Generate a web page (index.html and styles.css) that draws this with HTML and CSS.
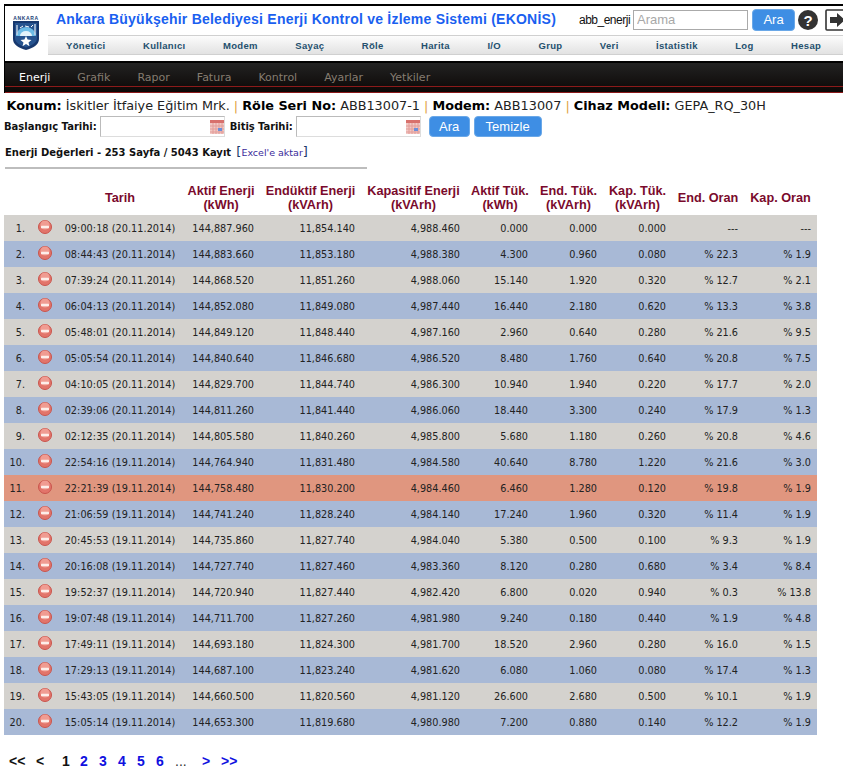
FILE: index.html
```html
<!DOCTYPE html>
<html lang="tr">
<head>
<meta charset="utf-8">
<title>EKONİS</title>
<link rel="stylesheet" href="styles.css">
</head>
<body>
<svg class="defs" width="0" height="0">
  <symbol id="minus" viewBox="0 0 14 14">
    <circle cx="7" cy="7" r="6.5" fill="#e2746a" stroke="#c9544c" stroke-width="1"/>
    <circle cx="7" cy="5" r="4.6" fill="#f09c92"/>
    <rect x="3" y="5.8" width="8" height="2.4" rx=".5" fill="#fdeeea"/>
  </symbol>
  <symbol id="cal" viewBox="0 0 14 14">
    <rect width="14" height="14" fill="#f2c8c4"/>
    <rect width="14" height="3" fill="#d8706c"/>
    <path d="M0 6h14M0 9h14M0 12h14M3 3v11M6 3v11M9 3v11M12 3v11" stroke="#e29c98" stroke-width="1"/>
    <rect x="8" y="8" width="4" height="3" fill="#6c8ed8"/>
  </symbol>
</svg>
<header class="frame">
  <div class="head">
    <svg class="logo" viewBox="0 0 30 36" width="30" height="36">
      <text x="15" y="4.5" text-anchor="middle" class="logo-text">ANKARA</text>
      <path d="M2 6h26v18c0 6-6 9-13 11C8 33 2 30 2 24z" fill="#17386e"/>
      <path d="M4 8h22v15c0 5-5 7-11 9.5-6-2.5-11-4.500-11-9.500z" fill="#26538f"/>
      <path d="M5 21a10 9 0 0 1 20 0z" fill="#6dbbe6"/>
      <path d="M9 21a6 5 0 0 1 12 0z" fill="#e4f2fa"/>
      <path d="M15 21l1.6 3.6 3.9.3-3 2.5 1 3.8-3.5-2.1-3.5 2.1 1-3.8-3-2.5 3.9-.3z" fill="#fff"/>
      <path d="M6 10v10M24 9v11" stroke="#c8d6e6" stroke-width="1.4"/>
      <path d="M9 13l3-2M14 11l4 1M20 12l2-2" stroke="#fff" stroke-width="1"/>
    </svg>
    <div class="head-main">
      <div class="head-top">
        <h1 class="title">Ankara Büyükşehir Belediyesi Enerji Kontrol ve İzleme Sistemi (EKONİS)</h1>
        <span class="user">abb_enerji</span>
        <input class="search" type="text" placeholder="Arama">
        <button class="btn btn-top" type="button">Ara</button>
        <svg class="help" viewBox="0 0 20 20" width="20" height="20">
          <circle cx="10" cy="10" r="10" fill="#333"/>
          <text x="10" y="15.5" text-anchor="middle" class="help-text">?</text>
        </svg>
        <svg class="exit" viewBox="0 0 20 22" width="20" height="22">
          <path d="M19 1H2a1 1 0 0 0-1 1v18a1 1 0 0 0 1 1h17" fill="none" stroke="#333" stroke-width="1.6"/>
          <path d="M5 8h7V4l8 7-8 7v-4H5z" fill="#333"/>
        </svg>
      </div>
      <nav class="menu">
        <a>Yönetici</a><a>Kullanıcı</a><a>Modem</a><a>Sayaç</a><a>Röle</a><a>Harita</a><a>I/O</a><a>Grup</a><a>Veri</a><a>İstatistik</a><a>Log</a><a>Hesap</a>
      </nav>
    </div>
  </div>
  <nav class="tabs">
    <a class="on">Enerji</a><a>Grafik</a><a>Rapor</a><a>Fatura</a><a>Kontrol</a><a>Ayarlar</a><a>Yetkiler</a>
  </nav>
</header>

<main class="main">
  <p class="info"><b>Konum:</b> İskitler İtfaiye Eğitim Mrk. <i>|</i> <b>Röle Seri No:</b> ABB13007-1 <i>|</i> <b>Modem:</b> ABB13007 <i>|</i> <b>Cihaz Modeli:</b> GEPA_RQ_30H</p>
  <form class="filter">
    <label class="lbl">Başlangıç Tarihi:</label>
    <span class="date"><svg class="cal"><use href="#cal"/></svg></span>
    <label class="lbl lbl-end">Bitiş Tarihi:</label>
    <span class="date"><svg class="cal"><use href="#cal"/></svg></span>
    <button class="btn btn-ara" type="button">Ara</button>
    <button class="btn btn-clear" type="button">Temizle</button>
  </form>
  <p class="count"><b>Enerji Değerleri - 253 Sayfa / 5043 Kayıt</b> <span class="br">[</span><a>Excel'e aktar</a><span class="br">]</span></p>
  <hr class="rule">
  <table class="grid">
    <colgroup>
      <col class="c-n"><col class="c-i"><col class="c-d"><col class="c-ae"><col class="c-ee"><col class="c-ke"><col class="c-at"><col class="c-et"><col class="c-kt"><col class="c-eo"><col class="c-ko">
    </colgroup>
    <thead>
      <tr><th></th><th></th><th>Tarih</th><th>Aktif Enerji<br>(kWh)</th><th>Endüktif Enerji<br>(kVArh)</th><th>Kapasitif Enerji<br>(kVArh)</th><th>Aktif Tük.<br>(kWh)</th><th>End. Tük.<br>(kVArh)</th><th>Kap. Tük.<br>(kVArh)</th><th>End. Oran</th><th>Kap. Oran</th></tr>
    </thead>
    <tbody>
      <tr><td>1.</td><td><svg class="del"><use href="#minus"/></svg></td><td>09:00:18 (20.11.2014)</td><td>144,887.960</td><td>11,854.140</td><td>4,988.460</td><td>0.000</td><td>0.000</td><td>0.000</td><td>---</td><td>---</td></tr>
      <tr><td>2.</td><td><svg class="del"><use href="#minus"/></svg></td><td>08:44:43 (20.11.2014)</td><td>144,883.660</td><td>11,853.180</td><td>4,988.380</td><td>4.300</td><td>0.960</td><td>0.080</td><td>% 22.3</td><td>% 1.9</td></tr>
      <tr><td>3.</td><td><svg class="del"><use href="#minus"/></svg></td><td>07:39:24 (20.11.2014)</td><td>144,868.520</td><td>11,851.260</td><td>4,988.060</td><td>15.140</td><td>1.920</td><td>0.320</td><td>% 12.7</td><td>% 2.1</td></tr>
      <tr><td>4.</td><td><svg class="del"><use href="#minus"/></svg></td><td>06:04:13 (20.11.2014)</td><td>144,852.080</td><td>11,849.080</td><td>4,987.440</td><td>16.440</td><td>2.180</td><td>0.620</td><td>% 13.3</td><td>% 3.8</td></tr>
      <tr><td>5.</td><td><svg class="del"><use href="#minus"/></svg></td><td>05:48:01 (20.11.2014)</td><td>144,849.120</td><td>11,848.440</td><td>4,987.160</td><td>2.960</td><td>0.640</td><td>0.280</td><td>% 21.6</td><td>% 9.5</td></tr>
      <tr><td>6.</td><td><svg class="del"><use href="#minus"/></svg></td><td>05:05:54 (20.11.2014)</td><td>144,840.640</td><td>11,846.680</td><td>4,986.520</td><td>8.480</td><td>1.760</td><td>0.640</td><td>% 20.8</td><td>% 7.5</td></tr>
      <tr><td>7.</td><td><svg class="del"><use href="#minus"/></svg></td><td>04:10:05 (20.11.2014)</td><td>144,829.700</td><td>11,844.740</td><td>4,986.300</td><td>10.940</td><td>1.940</td><td>0.220</td><td>% 17.7</td><td>% 2.0</td></tr>
      <tr><td>8.</td><td><svg class="del"><use href="#minus"/></svg></td><td>02:39:06 (20.11.2014)</td><td>144,811.260</td><td>11,841.440</td><td>4,986.060</td><td>18.440</td><td>3.300</td><td>0.240</td><td>% 17.9</td><td>% 1.3</td></tr>
      <tr><td>9.</td><td><svg class="del"><use href="#minus"/></svg></td><td>02:12:35 (20.11.2014)</td><td>144,805.580</td><td>11,840.260</td><td>4,985.800</td><td>5.680</td><td>1.180</td><td>0.260</td><td>% 20.8</td><td>% 4.6</td></tr>
      <tr><td>10.</td><td><svg class="del"><use href="#minus"/></svg></td><td>22:54:16 (19.11.2014)</td><td>144,764.940</td><td>11,831.480</td><td>4,984.580</td><td>40.640</td><td>8.780</td><td>1.220</td><td>% 21.6</td><td>% 3.0</td></tr>
      <tr class="alert"><td>11.</td><td><svg class="del"><use href="#minus"/></svg></td><td>22:21:39 (19.11.2014)</td><td>144,758.480</td><td>11,830.200</td><td>4,984.460</td><td>6.460</td><td>1.280</td><td>0.120</td><td>% 19.8</td><td>% 1.9</td></tr>
      <tr><td>12.</td><td><svg class="del"><use href="#minus"/></svg></td><td>21:06:59 (19.11.2014)</td><td>144,741.240</td><td>11,828.240</td><td>4,984.140</td><td>17.240</td><td>1.960</td><td>0.320</td><td>% 11.4</td><td>% 1.9</td></tr>
      <tr><td>13.</td><td><svg class="del"><use href="#minus"/></svg></td><td>20:45:53 (19.11.2014)</td><td>144,735.860</td><td>11,827.740</td><td>4,984.040</td><td>5.380</td><td>0.500</td><td>0.100</td><td>% 9.3</td><td>% 1.9</td></tr>
      <tr><td>14.</td><td><svg class="del"><use href="#minus"/></svg></td><td>20:16:08 (19.11.2014)</td><td>144,727.740</td><td>11,827.460</td><td>4,983.360</td><td>8.120</td><td>0.280</td><td>0.680</td><td>% 3.4</td><td>% 8.4</td></tr>
      <tr><td>15.</td><td><svg class="del"><use href="#minus"/></svg></td><td>19:52:37 (19.11.2014)</td><td>144,720.940</td><td>11,827.440</td><td>4,982.420</td><td>6.800</td><td>0.020</td><td>0.940</td><td>% 0.3</td><td>% 13.8</td></tr>
      <tr><td>16.</td><td><svg class="del"><use href="#minus"/></svg></td><td>19:07:48 (19.11.2014)</td><td>144,711.700</td><td>11,827.260</td><td>4,981.980</td><td>9.240</td><td>0.180</td><td>0.440</td><td>% 1.9</td><td>% 4.8</td></tr>
      <tr><td>17.</td><td><svg class="del"><use href="#minus"/></svg></td><td>17:49:11 (19.11.2014)</td><td>144,693.180</td><td>11,824.300</td><td>4,981.700</td><td>18.520</td><td>2.960</td><td>0.280</td><td>% 16.0</td><td>% 1.5</td></tr>
      <tr><td>18.</td><td><svg class="del"><use href="#minus"/></svg></td><td>17:29:13 (19.11.2014)</td><td>144,687.100</td><td>11,823.240</td><td>4,981.620</td><td>6.080</td><td>1.060</td><td>0.080</td><td>% 17.4</td><td>% 1.3</td></tr>
      <tr><td>19.</td><td><svg class="del"><use href="#minus"/></svg></td><td>15:43:05 (19.11.2014)</td><td>144,660.500</td><td>11,820.560</td><td>4,981.120</td><td>26.600</td><td>2.680</td><td>0.500</td><td>% 10.1</td><td>% 1.9</td></tr>
      <tr><td>20.</td><td><svg class="del"><use href="#minus"/></svg></td><td>15:05:14 (19.11.2014)</td><td>144,653.300</td><td>11,819.680</td><td>4,980.980</td><td>7.200</td><td>0.880</td><td>0.140</td><td>% 12.2</td><td>% 1.9</td></tr>
    </tbody>
  </table>
  <nav class="pager">
    <span class="p-first">&lt;&lt;</span><span class="p-prev">&lt;</span><span class="p-cur">1</span><a>2</a><a>3</a><a>4</a><a>5</a><a>6</a><span class="p-dots">...</span><a class="p-next">&gt;</a><a class="p-last">&gt;&gt;</a>
  </nav>
</main>
</body>
</html>
```
FILE: styles.css
```css
* { box-sizing: border-box; }
html, body { margin: 0; padding: 0; background: #fff; }
body { font-family: "DejaVu Sans", Verdana, sans-serif; color: #111; width: 843px; overflow-x: hidden; }
.defs { position: absolute; }

.frame { margin: 4px 0 0 4px; border-top: 2px solid #000; border-left: 1px solid #000; }
.head { display: flex; height: 55px; background: #fff; }
.logo { margin: 9px 0 0 6px; flex: none; }
.logo-text { font: bold 5px "Liberation Sans", sans-serif; letter-spacing: .6px; fill: #1d3f78; }
.head-main { margin-left: 7px; flex: 1; min-width: 0; }
.head-top { display: flex; align-items: center; height: 27px; margin-bottom: 2px; padding-left: 8px; }
.title { margin: 0 0 1px; width: 523px; flex: none; font: bold 14px "Liberation Sans", Arial, sans-serif; letter-spacing: .23px; color: #1a5ff0; white-space: nowrap; }
.user { font: 12px "Liberation Sans", Arial, sans-serif; color: #111; letter-spacing: -.5px; margin-right: 3px; }
.search { width: 115px; height: 20px; border: 1px solid #aaa; padding: 0 3px; font: 13px "Liberation Sans", Arial, sans-serif; margin: 0 4px 0 0; }
.search::placeholder { color: #a8a8a8; opacity: 1; }
.btn { border: 1px solid #6aa8e8; border-radius: 4px; background: #3e8ee4; color: #fff; font: 13px "Liberation Sans", Arial, sans-serif; padding: 0; }
.btn-top { width: 43px; height: 22px; margin-right: 3px; flex: none; }
.help { flex: none; margin-right: 7px; }
.help-text { font: bold 15px "Liberation Sans", sans-serif; fill: #fff; }
.exit { flex: none; }
.menu { display: flex; gap: 37.4px; height: 20px; padding-left: 18px; align-items: center; background: linear-gradient(#fcfcfc, #e2e2e2); border-top: 1px solid #d0d0d0; border-bottom: 1px solid #d0d0d0; font: bold 9.5px "Liberation Sans", Arial, sans-serif; letter-spacing: .33px; color: #24506e; white-space: nowrap; }

.tabs { display: flex; gap: 27px; height: 32px; padding: 0 0 0 14px; align-items: center; background: linear-gradient(#222 0, #0c0806 100%); border-top: 2px solid #000; font-size: 11px; color: #857c70; position: relative; border-bottom: 1px solid #8c1a1a; }
.tabs::after { content: ""; position: absolute; left: 0; right: 0; bottom: 5px; height: 1px; background: #8c1a1a; }
.tabs .on { color: #fff; }

.main { display: block; }
.info { margin: 5px 0 0 6.5px; font-size: 12.8px; line-height: 15px; white-space: nowrap; color: #222; }
.info b { color: #000; }
.info i { font-style: normal; color: #e0a040; }
.filter { display: flex; align-items: center; height: 21px; margin: 3px 0 0 4px; }
.lbl { font-size: 10px; font-weight: bold; color: #111; white-space: nowrap; }
.lbl-end { letter-spacing: -.08px; }
.date { display: flex; justify-content: flex-end; align-items: center; height: 21px; width: 125px; margin: 0 5px 0 3px; border: 1px solid #ddd; border-top-color: #bbb; border-left-color: #bbb; background: #fff; }
.cal { width: 14px; height: 14px; }
.btn-ara { width: 41px; height: 21px; margin: 0 4px 0 3px; }
.btn-clear { width: 68px; height: 21px; }
.count { margin: 7px 0 0 5px; font-size: 10px; line-height: 15px; white-space: nowrap; color: #111; }
.count a { color: #3a2a9a; font-size: 9.5px; }
.br { font-size: 13px; color: #1a3a6a; font-weight: normal; margin-left: 2px; }
.count a + .br { margin-left: 0; }
.rule { width: 362px; height: 2px; margin: 7px 0 0 5px; border: 0; background: #bdbdbd; }

.grid { width: 813px; margin: 12px 0 0 4px; border-collapse: collapse; table-layout: fixed; }
.c-n { width: 28px; } .c-i { width: 28px; } .c-d { width: 122px; }
.c-ae { width: 78px; } .c-ee { width: 101px; } .c-ke { width: 105px; }
.c-at { width: 68px; } .c-et { width: 69px; } .c-kt { width: 69px; }
.c-eo { width: 72px; } .c-ko { width: 73px; }
.grid th { height: 34px; padding: 0; font: bold 12.7px/14px "Liberation Sans", Arial, sans-serif; color: #7a0a2c; text-align: center; white-space: nowrap; }
.grid th:nth-child(3) { padding-right: 2px; }
.grid td { height: 26px; padding: 0 6px 0 0; font-size: 9.7px; color: #222; text-align: right; white-space: nowrap; background: #d4d2ce; }
.grid tbody tr:nth-child(even) td { background: #a8b9d6; }
.grid tbody tr.alert td { background: #e0967f; }
.grid td:nth-child(1) { padding-right: 7px; }
.grid td:nth-child(2) { padding: 0; text-align: center; }
.grid td:nth-child(3) { padding: 0 2px 0 0; text-align: center; letter-spacing: .05px; }
.del { display: block; width: 14px; height: 14px; margin: -3px auto 0 6px; }

.pager { display: flex; align-items: center; height: 20px; margin: 16px 0 0 9px; font: bold 14px "Liberation Sans", Arial, sans-serif; color: #111; }
.pager span, .pager a { display: block; white-space: nowrap; }
.pager a { color: #1010e0; width: 19px; }
.p-first { width: 27px; }
.p-prev { width: 26px; }
.p-cur { width: 18px; }
.p-dots { width: 27px; color: #333; font-weight: normal; }
.pager .p-next { width: 19px; }
.pager .p-last { width: 20px; }
```
